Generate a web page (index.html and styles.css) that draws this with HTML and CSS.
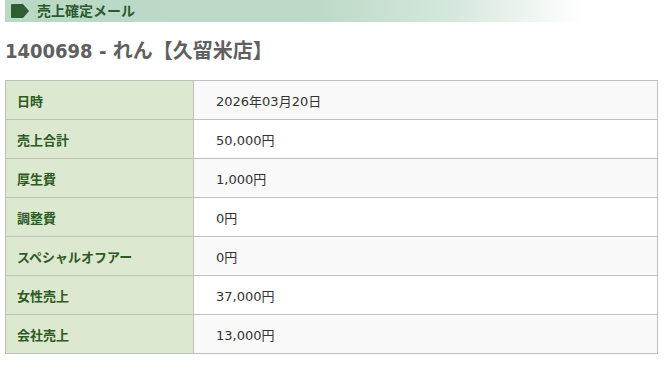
FILE: index.html
```html
<!DOCTYPE html>
<html lang="ja">
<head>
<meta charset="utf-8">
<link rel="stylesheet" href="styles.css">
</head>
<body>
<div class="page">
  <div class="bar">
    <svg class="bar-icon" width="20" height="16" viewBox="0 0 20 16"><path d="M2 1 H13 L19 8 L13 15 H2 Q1 15 1 14 V2 Q1 1 2 1 Z" fill="#2e5e32"/></svg>
    <span class="bar-title">売上確定メール</span>
  </div>
  <h1 class="title">1400698 - れん【久留米店】</h1>
  <table class="info">
    <tr><th>日時</th><td>2026年03月20日</td></tr>
    <tr><th>売上合計</th><td>50,000円</td></tr>
    <tr><th>厚生費</th><td>1,000円</td></tr>
    <tr><th>調整費</th><td>0円</td></tr>
    <tr><th>スペシャルオフアー</th><td>0円</td></tr>
    <tr><th>女性売上</th><td>37,000円</td></tr>
    <tr><th>会社売上</th><td>13,000円</td></tr>
  </table>
</div>
</body>
</html>
```
FILE: styles.css
```css
html, body { margin: 0; padding: 0; background: #fff; }
body { font-family: "DejaVu Sans", "Noto Sans CJK JP", sans-serif; }
.page { padding: 0 8px 0 5px; }
.bar {
  width: 578px;
  height: 22px;
  display: flex;
  align-items: center;
  background: linear-gradient(to right, #b9d9c5 0%, #bddac8 55%, #d6e8dd 78%, #ffffff 100%);
}
.bar-icon { margin-left: 5px; margin-right: 7px; display: block; }
.bar-title { font-size: 14px; font-weight: bold; color: #2b5a2e; line-height: 22px; }
.title {
  margin: 15px 0 0 0;
  font-family: "DejaVu Sans Condensed", "DejaVu Sans", "Noto Sans CJK JP", sans-serif;
  font-size: 20px;
  font-weight: bold;
  line-height: 28px;
  color: #606060;
}
.info {
  margin-top: 15px;
  width: 653px;
  border-collapse: collapse;
  font-size: 13px;
}
.info th, .info td {
  border: 1px solid #c0c0c0;
  height: 39px;
  padding: 0;
  box-sizing: border-box;
}
.info th {
  width: 188px;
  background: #dce8cf;
  color: #2d5a22;
  text-align: left;
  padding-left: 11px;
  font-weight: bold;
}
.info td { padding-left: 22px; color: #333; }
.info tr:nth-child(odd) td { background: #f9f9f9; }
.info tr:nth-child(even) td { background: #fff; }
```
